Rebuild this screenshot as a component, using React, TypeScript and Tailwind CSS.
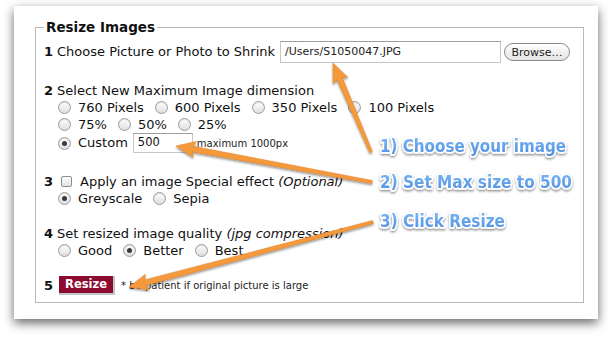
import React from 'react';

type Pt = [number, number];

function Radio({ checked, label }: { checked?: boolean; label: string }) {
  return (
    <span className="flex items-center">
      <span className="flex h-[13px] w-[13px] items-center justify-center rounded-full border border-[#9c9c9c] bg-gradient-to-b from-[#ffffff] to-[#dedede] shadow-[inset_0_1px_1px_rgba(0,0,0,0.12)]">
        {checked && <span className="h-[5px] w-[5px] rounded-full bg-[#3a3a3a]" />}
      </span>
      <span className="ml-[7px]">{label}</span>
    </span>
  );
}

function arrowPoints(tail: Pt, tip: Pt) {
  const dx = tip[0] - tail[0];
  const dy = tip[1] - tail[1];
  const len = Math.hypot(dx, dy);
  const ux = dx / len;
  const uy = dy / len;
  const nx = -uy;
  const ny = ux;
  const hl = 17;
  const hw = 8;
  const wt = 1.4;
  const wh = 2.8;
  const bx = tip[0] - ux * hl;
  const by = tip[1] - uy * hl;
  const pts: Pt[] = [
    [tail[0] + nx * wt, tail[1] + ny * wt],
    [bx + nx * wh, by + ny * wh],
    [bx + nx * hw + ux * -2, by + ny * hw + uy * -2],
    tip,
    [bx - nx * hw + ux * -2, by - ny * hw + uy * -2],
    [bx - nx * wh, by - ny * wh],
    [tail[0] - nx * wt, tail[1] - ny * wt],
  ];
  return pts.map((p) => `${p[0].toFixed(1)},${p[1].toFixed(1)}`).join(' ');
}

const arrows: { tail: Pt; tip: Pt }[] = [
  { tail: [371, 152], tip: [333, 63] },
  { tail: [372, 182], tip: [176, 146] },
  { tail: [373, 222], tip: [129, 287] },
];

const labels = [
  { text: '1) Choose your image', y: 152, w: 186 },
  { text: '2) Set Max size to 500', y: 188, w: 192 },
  { text: '3) Click Resize', y: 227, w: 125 },
];

export default function App() {
  return (
    <div className="relative h-[341px] w-[610px] overflow-hidden bg-white font-['DejaVu_Sans',sans-serif] text-[13px] text-[#111]">
      <div className="ml-[14px] mt-[6px] h-[313px] w-[584px] bg-white pt-[13px] shadow-[0_4px_10px_rgba(0,0,0,0.6)]">
        <fieldset className="ml-[21px] w-[549px] border border-[#b9b9b9] pb-[7px] pl-[8px] pt-[6px]">
          <legend className="px-[2px] text-[13.5px] font-bold leading-[16px]">Resize Images</legend>

          {/* 1 */}
          <div className="flex h-[22px] items-center">
            <b>1</b>
            <span className="ml-[4px]">Choose Picture or Photo to Shrink</span>
            <div className="ml-[5px] flex h-[22px] w-[221px] items-center border border-[#c6c6c6] border-t-[#9e9e9e] pl-[4px] text-[11px] text-[#222]">
              /Users/S1050047.JPG
            </div>
            <button className="ml-[3px] h-[18px] w-[66px] rounded-full border border-[#8a8a8a] bg-gradient-to-b from-[#ffffff] to-[#e4e4e4] text-[11px] leading-none text-[#222]">
              Browse…
            </button>
          </div>

          {/* 2 */}
          <div className="mt-[19px] flex h-[17px] items-center">
            <b>2</b>
            <span className="ml-[4px]">Select New Maximum Image dimension</span>
          </div>
          <div className="ml-[14px] flex h-[17px] items-center gap-[11px]">
            <Radio label="760 Pixels" />
            <Radio label="600 Pixels" />
            <Radio label="350 Pixels" />
            <Radio label="100 Pixels" />
          </div>
          <div className="ml-[14px] flex h-[17px] items-center gap-[11px]">
            <Radio label="75%" />
            <Radio label="50%" />
            <Radio label="25%" />
          </div>
          <div className="ml-[14px] flex h-[20px] items-center">
            <Radio checked label="Custom" />
            <div className="ml-[5px] flex h-[20px] w-[60px] items-center border border-[#c6c6c6] border-t-[#9e9e9e] pl-[4px] text-[11.5px]">
              500
            </div>
            <span className="ml-[4px] text-[10px] text-[#222]">maximum 1000px</span>
          </div>

          {/* 3 */}
          <div className="mt-[20px] flex h-[17px] items-center">
            <b>3</b>
            <span className="ml-[8px] h-[11px] w-[11px] rounded-[2px] border border-[#8e8e8e] bg-gradient-to-b from-[#ffffff] to-[#e2e2e2]" />
            <span className="ml-[8px]">
              Apply an image Special effect <i>(Optional)</i>
            </span>
          </div>
          <div className="ml-[14px] flex h-[17px] items-center gap-[11px]">
            <Radio checked label="Greyscale" />
            <Radio label="Sepia" />
          </div>

          {/* 4 */}
          <div className="mt-[18px] flex h-[17px] items-center">
            <b>4</b>
            <span className="ml-[4px]">
              Set resized image quality <i>(jpg compression)</i>
            </span>
          </div>
          <div className="ml-[14px] flex h-[17px] items-center gap-[11px]">
            <Radio label="Good" />
            <Radio checked label="Better" />
            <Radio label="Best" />
          </div>

          {/* 5 */}
          <div className="mt-[17px] flex h-[19px] items-center">
            <b className="text-[13px]">5</b>
            <button className="ml-[6px] h-[19px] w-[56px] border-b-2 border-r-2 border-[#c4c4c4] bg-[#8c0b31] text-[11.5px] font-bold leading-none text-white">
              Resize
            </button>
            <span className="ml-[6px] text-[10px] text-[#222]">* be patient if original picture is large</span>
          </div>
        </fieldset>
      </div>

      <svg className="pointer-events-none absolute left-0 top-0" width="610" height="341" viewBox="0 0 610 341">
        <defs>
          <linearGradient id="lbl" x1="0" y1="0" x2="0" y2="1">
            <stop offset="0" stopColor="#7db9f4" />
            <stop offset="1" stopColor="#4f8fe2" />
          </linearGradient>
          <filter id="sh" x="-10%" y="-30%" width="120%" height="160%">
            <feDropShadow dx="0" dy="1.5" stdDeviation="1.2" floodColor="#000" floodOpacity="0.45" />
          </filter>
        </defs>
        {arrows.map((a, i) => (
          <polygon
            key={i}
            points={arrowPoints(a.tail, a.tip)}
            fill="#f49a3e"
            stroke="#e58528"
            strokeWidth="0.6"
            strokeLinejoin="round"
            filter="url(#sh)"
          />
        ))}
        {labels.map((l) => (
          <text
            key={l.text}
            x="380"
            y={l.y}
            fontFamily="'DejaVu Sans', sans-serif"
            fontWeight="bold"
            fontSize="18"
            textLength={l.w}
            lengthAdjust="spacingAndGlyphs"
            fill="url(#lbl)"
            stroke="#ffffff"
            strokeWidth="3.5"
            strokeLinejoin="round"
            paintOrder="stroke"
            filter="url(#sh)"
          >
            {l.text}
          </text>
        ))}
      </svg>
    </div>
  );
}
